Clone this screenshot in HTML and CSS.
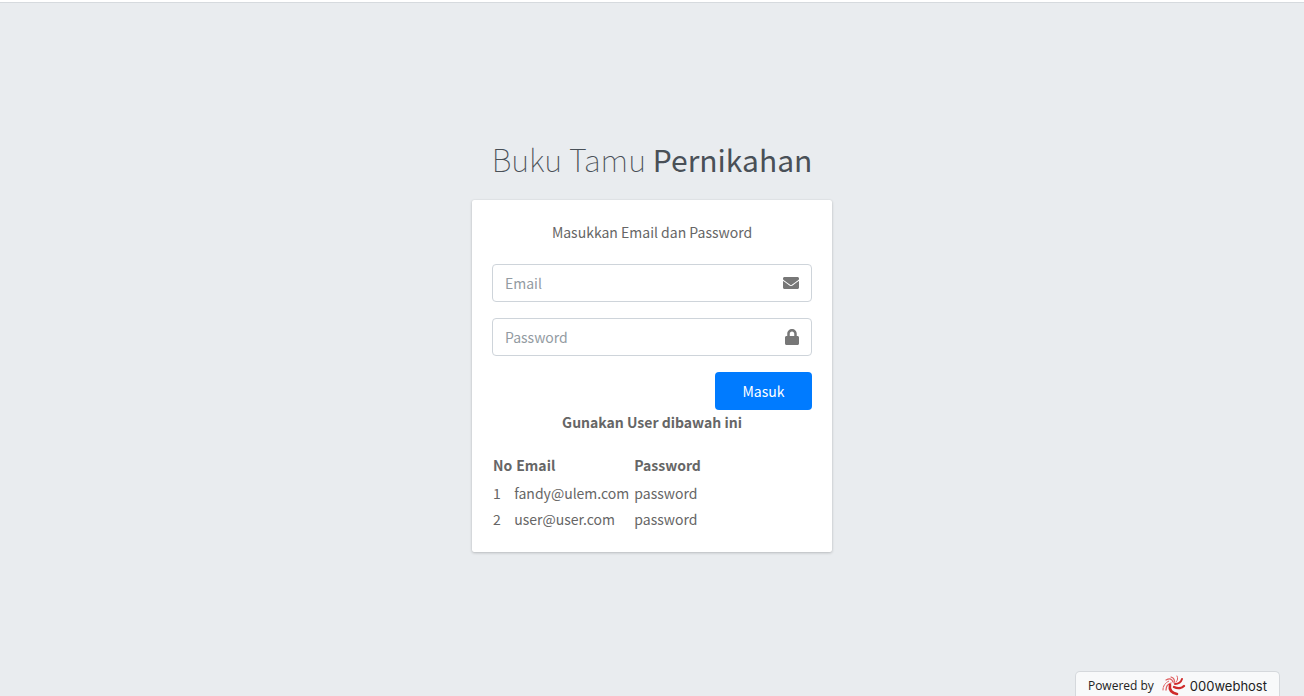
FILE: index.html
```html
<!DOCTYPE html>
<html lang="id">
<head>
<meta charset="utf-8">
<title>Buku Tamu Pernikahan</title>
<link rel="stylesheet" href="styles.css">
</head>
<body>
<header class="topbar"></header>
<main class="login-page">
  <div class="login-box">
    <h1 class="login-logo">Buku Tamu <b>Pernikahan</b></h1>
    <div class="card">
      <p class="login-msg">Masukkan Email dan Password</p>
      <form class="login-form">
        <div class="field">
          <input type="email" placeholder="Email" aria-label="Email">
          <svg class="icon" viewBox="0 0 512 512" aria-hidden="true"><path d="M502.3 190.8c3.9-3.1 9.7-.2 9.7 4.700V400c0 26.500-21.500 48-48 48H48c-26.500 0-48-21.500-48-48V195.600c0-5 5.700-7.800 9.700-4.700 22.400 17.400 52.100 39.500 154.100 113.600 21.100 15.400 56.700 47.800 92.200 47.600 35.700.3 72-32.800 92.300-47.600 102-74.100 131.600-96.300 154-113.700zM256 320c23.200.4 56.600-29.200 73.400-41.400 132.700-96.300 142.800-104.700 173.400-128.700 5.800-4.500 9.200-11.500 9.200-18.900v-19c0-26.500-21.500-48-48-48H48c-26.500 0-48 21.500-48 48v19c0 7.400 3.400 14.300 9.200 18.900 30.600 23.900 40.700 32.400 173.400 128.700 16.800 12.200 50.200 41.800 73.400 41.400z"/></svg>
        </div>
        <div class="field">
          <input type="password" placeholder="Password" aria-label="Password">
          <svg class="icon icon-lock" viewBox="0 0 448 512" aria-hidden="true"><path d="M400 224h-24v-72C376 68.200 307.800 0 224 0S72 68.200 72 152v72H48c-26.500 0-48 21.500-48 48v192c0 26.500 21.500 48 48 48h352c26.500 0 48-21.500 48-48V272c0-26.500-21.500-48-48-48zm-104 0H152v-72c0-39.700 32.300-72 72-72s72 32.300 72 72v72z"/></svg>
        </div>
        <button class="submit" type="button">Masuk</button>
      </form>
      <p class="hint">Gunakan User dibawah ini</p>
      <table class="users">
        <thead><tr><th>No</th><th class="mail">Email</th><th>Password</th></tr></thead>
        <tbody>
          <tr><td>1</td><td class="address">fandy@ulem.com</td><td>password</td></tr>
          <tr><td>2</td><td class="address">user@user.com</td><td>password</td></tr>
        </tbody>
      </table>
    </div>
  </div>
</main>
<a class="badge" href="#">
  <span>Powered by</span>
  <svg class="swirl" viewBox="0 0 24 22" aria-hidden="true">
    <g fill="none" stroke="#df5a5c" stroke-linecap="round">
      <path d="M1 15C1 11 3 8 7 6" stroke-width="1" stroke-dasharray="2 1"/>
      <path d="M4 15C4 11 6 9 9 8" stroke-width="1.300"/>
      <path d="M4 5C8 3 10 4 11 7" stroke-width="1.200"/>
      <path d="M9 2C12 3 13 5 12 8" stroke-width="1.200"/>
      <path d="M15 1C16 3 16 5 14 7" stroke-width="1"/>
    </g>
    <g fill="none" stroke="#cf2a2a" stroke-linecap="round">
      <path d="M13 9C16 9 19 7 20 4" stroke-width="2"/>
      <path d="M12 12C16 14 20 13 22 11" stroke-width="2.400"/>
      <path d="M8 10C7 15 10 18 15 19" stroke-width="2.600"/>
    </g>
  </svg>
  <span class="brand">000webhost</span>
</a>
</body>
</html>
```
FILE: styles.css
```css
* { box-sizing: border-box; }
body {
  margin: 0;
  min-height: 100vh;
  display: flex;
  flex-direction: column;
  background: #e9ecef;
  color: #666;
  font: 14px/24px "Noto Sans CJK SC", sans-serif;
}
.topbar { height: 3px; background: #fff; border-bottom: 1px solid #d6dade; }
.login-page { flex: 1; display: flex; align-items: center; justify-content: center; }
.login-box { width: 360px; }
.login-logo {
  margin: 0 0 14px;
  color: #495057;
  font-size: 31px;
  font-weight: 100;
  line-height: 53px;
  text-align: center;
  white-space: nowrap;
}
.login-logo b { font-size: 30px; font-weight: 400; }
.card {
  margin-bottom: 16px;
  padding: 20px;
  background: #fff;
  border-radius: 2px;
  box-shadow: 0 0 1px rgba(0, 0, 0, .13), 0 1px 3px rgba(0, 0, 0, .2);
}
.login-msg { margin: 0 0 20px; text-align: center; }
.login-form { display: flex; flex-direction: column; gap: 16px; }
.field {
  display: flex;
  align-items: center;
  height: 38px;
  padding: 0 12px;
  border: 1px solid #ced4da;
  border-radius: 4px;
}
.field input {
  flex: 1;
  min-width: 0;
  padding: 0;
  border: 0;
  outline: 0;
  background: none;
  color: #495057;
  font: inherit;
}
.field input::placeholder { color: #939ba2; opacity: 1; }
.icon { width: 16px; height: 16px; fill: #777; }
.icon-lock { width: 14px; }
.submit {
  align-self: flex-end;
  width: 97px;
  height: 38px;
  padding: 0;
  border: 0;
  border-radius: 4px;
  background: #007bff;
  color: #fff;
  font: inherit;
}
.hint { margin: 0 0 18px; font-weight: 700; text-align: center; }
.users { border-collapse: collapse; }
.users th, .users td { padding: 1px; text-align: left; }
.users th { padding-bottom: 3px; }
.users .mail { padding-left: 3px; }
.users .address { padding-right: 4px; }
.badge {
  position: fixed;
  right: 24px;
  bottom: 0;
  display: flex;
  align-items: center;
  height: 25px;
  padding: 4px 12px 0;
  border: 1px solid #d5d8dc;
  border-bottom: 0;
  border-radius: 5px 5px 0 0;
  background: #f8f9fa;
  color: #222;
  font: 12px/20px "Open Sans", sans-serif;
  text-decoration: none;
}
.swirl { width: 24px; height: 22px; margin: 0 4px 0 8px; }
.brand { font-family: Inter, sans-serif; font-size: 13px; }
```
